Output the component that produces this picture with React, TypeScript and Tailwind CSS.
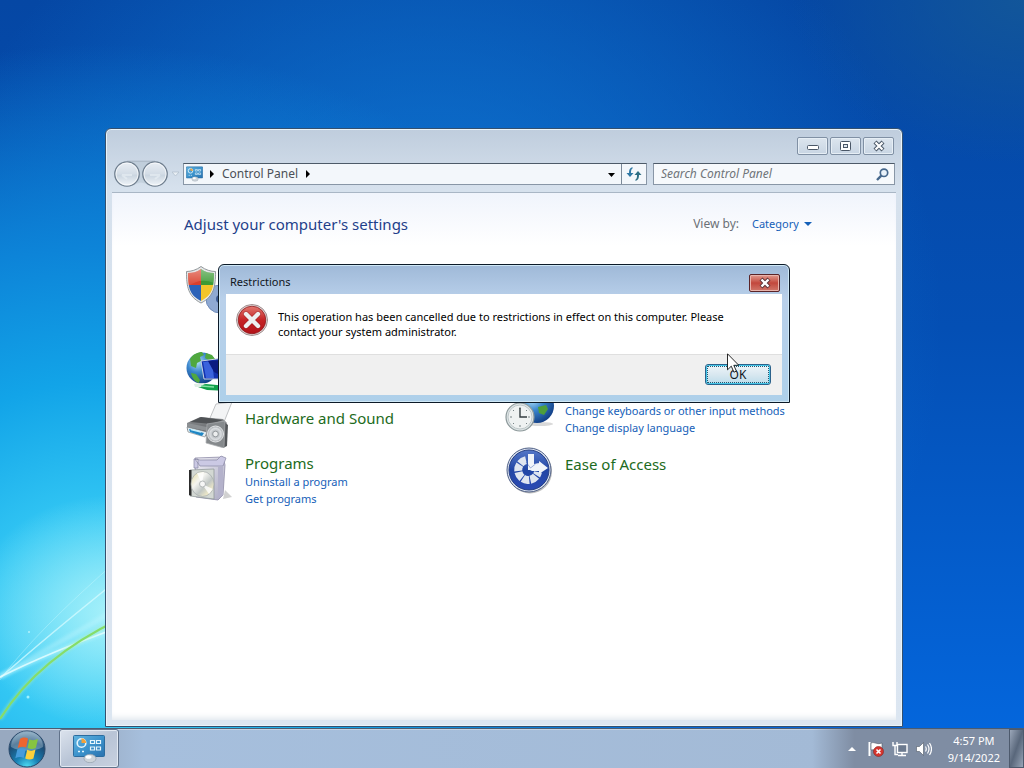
import type { ReactNode } from 'react';

interface Category {
  title?: string;
  links: string[];
  icon: ReactNode;
  className: string;
}

function Wallpaper() {
  return (
    <svg className="absolute bottom-0 left-0 h-[220px] w-[260px]" viewBox="0 0 260 220" fill="none" aria-hidden="true">
      <defs>
        <filter id="soft" x="-20%" y="-20%" width="140%" height="140%">
          <feGaussianBlur stdDeviation="1.6" />
        </filter>
      </defs>
      <path d="M0 168 Q50 140 110 105" stroke="#c6f8ff" strokeWidth="5" opacity=".35" filter="url(#soft)" />
      <path d="M0 170 Q45 130 120 70" stroke="#d5fbff" strokeWidth="1.6" opacity=".75" />
      <path d="M0 172 Q34 125 120 50" stroke="#d5fbff" strokeWidth="1" opacity=".35" />
      <path d="M0 169 Q50 144 120 119" stroke="#b9f7ff" strokeWidth="5" opacity=".5" filter="url(#soft)" />
      <path d="M0 169 Q50 144 120 119" stroke="#e4fdff" strokeWidth="1.8" opacity=".85" />
      <path d="M0 211 Q38 150 120 111" stroke="#a8f0b0" strokeWidth="4" opacity=".5" filter="url(#soft)" />
      <path d="M0 211 Q38 150 120 111" stroke="#86dd69" strokeWidth="2" />
      <circle cx="28" cy="189" r="1.5" fill="#b9fbff" opacity=".8" />
      <circle cx="29" cy="124" r="1" fill="#d5fbff" opacity=".7" />
    </svg>
  );
}

function ControlPanelIcon({ className }: { className: string }) {
  return (
    <svg className={className} viewBox="0 0 32 28" fill="none" aria-hidden="true">
      <defs>
        <linearGradient id="cpl" x1="0" y1="0" x2="1" y2="1">
          <stop stopColor="#62b4e0" />
          <stop offset=".5" stopColor="#3d94cd" />
          <stop offset="1" stopColor="#2a72ae" />
        </linearGradient>
      </defs>
      <rect x=".5" y=".5" width="31" height="21" rx="1" fill="url(#cpl)" stroke="#2b6c9f" />
      <circle cx="8.5" cy="8" r="4.3" stroke="#e4f5fd" strokeWidth="1.6" />
      <path d="M8.5 8V3.2A4.8 4.8 0 0 1 13.2 8z" fill="#f3a23a" />
      <path d="M17.5 5.5h4v3h-4zM23.5 5.5h4v3h-4zM17.5 12h4v3h-4zM23.5 12h4v3h-4z" stroke="#e4f5fd" strokeWidth="1.2" />
      <path d="M5 16.5h2M9 16.5h2" stroke="#e4f5fd" strokeWidth="1.5" />
      <ellipse cx="17" cy="23.5" rx="6" ry="4.200" fill="#cdd4da" stroke="#8b98a5" strokeWidth=".6" />
      <ellipse cx="15.5" cy="22" rx="3" ry="1.800" fill="#fff" />
    </svg>
  );
}

function NavButtons() {
  return (
    <svg className="h-[30px] w-[71px] shrink-0" viewBox="0 0 71 30" fill="none" aria-hidden="true">
      <defs>
        <linearGradient id="nav" x1="0" y1="0" x2="0" y2="1">
          <stop stopColor="#e9eef4" />
          <stop offset=".5" stopColor="#d3dce6" />
          <stop offset=".55" stopColor="#cad5e0" />
          <stop offset="1" stopColor="#f2f6fa" />
        </linearGradient>
      </defs>
      <path d="M15 2.5h28a12.5 12.5 0 0 1 0 25c-6 0-10-4-14-4s-8 4-14 4a12.5 12.5 0 0 1 0-25z" fill="#b7c4d2" opacity=".55" />
      <path d="M15 2.2h28" stroke="#a5b2c0" />
      <circle cx="15" cy="15" r="12.2" fill="url(#nav)" stroke="#707f8f" strokeWidth="1.3" />
      <circle cx="43" cy="15" r="12.2" fill="url(#nav)" stroke="#707f8f" strokeWidth="1.3" />
      <circle cx="15" cy="15" r="11" stroke="#fff" strokeWidth=".8" opacity=".8" />
      <circle cx="43" cy="15" r="11" stroke="#fff" strokeWidth=".8" opacity=".8" />
      <path d="M10 16l5 4M10 16h10M48 16l-5 4M48 16H38" stroke="#e6ecf2" strokeWidth="2" opacity=".7" />
      <path d="M60 13h7l-3.5 4z" fill="#e9eff5" stroke="#b3c0ce" strokeWidth=".8" />
    </svg>
  );
}

function ShieldIcon() {
  return (
    <svg className="size-12 overflow-visible" viewBox="0 0 48 48" fill="none" aria-hidden="true">
      <defs>
        <clipPath id="shield">
          <path d="M15 3C11 6 6 7 2 7c0 13 1 22 13 28C27 29 28 20 28 7c-4 0-9-1-13-4z" />
        </clipPath>
        <linearGradient id="gloss" x1="0" y1="0" x2="0" y2="1">
          <stop stopColor="#fff" stopOpacity=".45" />
          <stop offset="1" stopColor="#fff" stopOpacity="0" />
        </linearGradient>
      </defs>
      <circle cx="34" cy="33" r="14" fill="#8fa9d2" stroke="#6f8bb9" />
      <circle cx="34" cy="33" r="4" fill="#3c5b93" />
      <path d="M15 .5C10.500 4 5 5.500.5 5.500c0 15 1.500 25 14.500 31.500 13-6.500 14.500-16.500 14.500-31.500C25 5.500 19.500 4 15 .5z" fill="#e6e8e9" stroke="#878d91" strokeWidth=".9" />
      <g clipPath="url(#shield)">
        <path d="M0 0h15v19H0z" fill="#d9402b" />
        <path d="M15 0h15v19H15z" fill="#3c9a34" />
        <path d="M0 19h15v19H0z" fill="#2b62b8" />
        <path d="M15 19h15v19H15z" fill="#f3c52a" />
        <path d="M0 0h30v18Q14 10 0 22z" fill="url(#gloss)" />
      </g>
    </svg>
  );
}

function NetworkIcon() {
  return (
    <svg className="size-12 overflow-visible" viewBox="0 0 48 48" fill="none" aria-hidden="true">
      <defs>
        <radialGradient id="globe" cx=".35" cy=".3" r=".75">
          <stop stopColor="#b4e2f8" />
          <stop offset=".45" stopColor="#3b86cd" />
          <stop offset="1" stopColor="#103c84" />
        </radialGradient>
      </defs>
      <circle cx="16" cy="20" r="15.500" fill="url(#globe)" />
      <path d="M4 11c3-5 8-7 12-7l2 3-4 2 1 4-4 2-1 5-5-2zM5 25l5 1 4 6-1 3c-4-1-7-5-8-10zM20 5l6 2 3 4-5 2-5-3z" fill="#50a83f" />
      <path d="M15 13l23-3v21H18z" fill="#1231ad" stroke="#c8d3e2" />
      <path d="M17 14l9-1 2 17h-8z" fill="#3a62dc" />
      <path d="M22 13l16-1v17L28 24z" fill="#0a1a80" />
      <path d="M9 38l11-2 22 2v5l-21-1z" fill="#12a04b" />
      <path d="M8 36l11-1-4 4-6 0z" fill="#dfeee5" />
      <path d="M15 38l13 1" stroke="#7fe0a0" strokeWidth="1.5" />
    </svg>
  );
}

function HardwareIcon() {
  return (
    <svg className="size-12" viewBox="0 0 48 48" fill="none" aria-hidden="true">
      <defs>
        <linearGradient id="metal" x1="0" y1="0" x2="0" y2="1">
          <stop stopColor="#94979a" />
          <stop offset="1" stopColor="#4e5154" />
        </linearGradient>
        <radialGradient id="cone">
          <stop stopColor="#f0f2f3" />
          <stop offset=".35" stopColor="#b7bcc0" />
          <stop offset=".7" stopColor="#dadde0" />
          <stop offset="1" stopColor="#a0a5a9" />
        </radialGradient>
      </defs>
      <path d="M24 18l6-14 16-2-8 20z" fill="#f3f4f5" stroke="#b2b5b8" strokeWidth=".8" />
      <path d="M1 23l13-6 23 2 4 4-9 13H16L1 30z" fill="url(#metal)" />
      <path d="M4 22l11-5 22 3-11 4z" fill="#505356" />
      <path d="M1 23l20 4v4L1 27z" fill="#8d9194" />
      <path d="M1 27l20 5-2 5-17-5z" fill="#e3edf2" stroke="#777c80" strokeWidth=".6" />
      <path d="M3 29l15 4-2 3-12-4z" fill="#1f86c4" />
      <path d="M5 29.500l10 2.500" stroke="#c6eefb" strokeWidth="1.500" />
      <path d="M38 22l4 3-1 21-4 2z" fill="#54575a" />
      <path d="M21 24l18-3-1 27-18-5z" fill="#85898c" stroke="#aaaeb0" strokeWidth=".7" />
      <circle cx="29.500" cy="34" r="8" fill="url(#cone)" stroke="#e4e6e8" />
      <circle cx="29.500" cy="34" r="2.800" fill="#eceeef" stroke="#858a8e" strokeWidth=".8" />
    </svg>
  );
}

function ProgramsIcon() {
  return (
    <svg className="size-12" viewBox="0 0 48 48" fill="none" aria-hidden="true">
      <defs>
        <linearGradient id="box" x1="0" y1="0" x2="1" y2="1">
          <stop stopColor="#f1f0f7" />
          <stop offset="1" stopColor="#a9a8c0" />
        </linearGradient>
        <linearGradient id="disc" x1="0" y1="0" x2="1" y2="1">
          <stop stopColor="#e6dd9c" />
          <stop offset=".35" stopColor="#f4f4f0" />
          <stop offset=".6" stopColor="#c0c6c4" />
          <stop offset=".8" stopColor="#ece7c8" />
          <stop offset="1" stopColor="#cfd2d4" />
        </linearGradient>
      </defs>
      <path d="M37 46l9-2-7-7z" fill="#9a9a9a" opacity=".45" />
      <path d="M9 5l28-1 2 8-2 30-5 5-22-3z" fill="url(#box)" stroke="#8f8da8" strokeWidth=".8" />
      <path d="M9 6l5 7h23l3-8-5-2-4 4H14zM8 6h4v9H8z" fill="#cbc9e4" stroke="#8886a3" strokeWidth=".7" />
      <path d="M32 14v32l5-4V13z" fill="#b4b2cb" />
      <path d="M4 17l24-1v30L4 43z" fill="#d3d8d3" stroke="#8b9394" strokeWidth=".7" />
      <path d="M3 17h2.5v26L3 42z" fill="#2c2c2c" />
      <ellipse cx="16.500" cy="31" rx="11.500" ry="12.500" fill="url(#disc)" stroke="#a4a9aa" strokeWidth=".7" />
      <path d="M16 31L11 20l7-1zM16 31l7 10 4-5z" fill="#fff" opacity=".8" />
      <circle cx="16.500" cy="31" r="3" fill="#f6f6f6" stroke="#a5aaab" strokeWidth=".8" />
    </svg>
  );
}

function ClockIcon() {
  return (
    <svg className="size-12 overflow-visible" viewBox="0 0 48 48" fill="none" aria-hidden="true">
      <ellipse cx="34" cy="42" rx="13" ry="2" fill="#000" opacity=".15" />
      <circle cx="31" cy="24" r="17" fill="url(#globe)" />
      <path d="M26 10l7 1 3 6-5 4-6-2zM32 25l8-2 2 4-4 6-5-2zM42 13l4 5-4 1z" fill="#4d9e3c" />
      <circle cx="14" cy="35" r="14" fill="#dde4e5" stroke="#8d999b" strokeWidth="1.2" />
      <circle cx="14" cy="35" r="12" fill="#eff2f2" stroke="#bfc8ca" />
      <path d="M14 25v2M14 43v2M4 35h2M22 35h2M7 28l1 1M20 41l1 1M7 42l1-1M20 29l1-1" stroke="#788487" />
      <path d="M14 26v9h7" stroke="#333c40" strokeWidth="1.4" />
    </svg>
  );
}

function EaseOfAccessIcon() {
  return (
    <svg className="size-12 overflow-visible" viewBox="0 0 48 48" fill="none" aria-hidden="true">
      <defs>
        <linearGradient id="ease" x1="0" y1="0" x2="0" y2="1">
          <stop stopColor="#5578c8" />
          <stop offset=".5" stopColor="#2145a5" />
          <stop offset="1" stopColor="#2b4bb4" />
        </linearGradient>
      </defs>
      <circle cx="24" cy="25.5" r="22" fill="#000" opacity=".25" />
      <circle cx="23" cy="24" r="22" fill="#dce3ef" stroke="#4e5f86" />
      <circle cx="23" cy="24" r="20" fill="url(#ease)" stroke="#253f86" />
      <path d="M20 14.200A10 10 0 1 0 32 26" stroke="#dfe5f0" strokeWidth="8" strokeDasharray="6.700 1.100" />
      <path d="M22 8h6v10l5-1-6 7h-5z" fill="#f0f4fa" />
      <path d="M24 24l9-7v-2l9 7-9 6v-3h-7z" fill="#f0f4fa" />
      <path d="M20 16l4.500 6 5-4" stroke="#2145a5" strokeWidth=".8" opacity=".5" />
    </svg>
  );
}

const LEFT: Category[] = [
  { links: [], icon: <ShieldIcon />, className: 'h-[82px]' },
  { links: [], icon: <NetworkIcon />, className: 'h-[52px]' },
  { title: 'Hardware and Sound', links: [], icon: <HardwareIcon />, className: 'h-[53px]' },
  { title: 'Programs', links: ['Uninstall a program', 'Get programs'], icon: <ProgramsIcon />, className: '' },
];

const RIGHT: Category[] = [
  { links: ['Change keyboards or other input methods', 'Change display language'], icon: <ClockIcon />, className: 'mt-[116px] h-16' },
  { title: 'Ease of Access', links: [], icon: <EaseOfAccessIcon />, className: '' },
];

function CategoryItem({ item }: { item: Category }) {
  const offset = !item.title ? 'pt-5' : item.links.length ? '' : 'pt-2';
  return (
    <li className={`flex gap-[11px] ${item.className}`}>
      <span className="shrink-0">{item.icon}</span>
      <div className={`flex flex-col items-start whitespace-nowrap ${offset}`}>
        {item.title ? (
          <a href="#" className="text-[15px] leading-5 text-[#1d6b21]">{item.title}</a>
        ) : null}
        {item.links.map((link) => (
          <a key={link} href="#" className="text-[11px] leading-[17px] text-[#1560b8]">{link}</a>
        ))}
      </div>
    </li>
  );
}

function CaptionButton({ label, children }: { label: string; children: ReactNode }) {
  return (
    <button
      type="button"
      aria-label={label}
      className="flex h-[18px] w-[31px] items-center justify-center rounded-[2px] border border-[#8090a4] bg-linear-to-b from-[#dce5ee] to-[#c8d5e3] shadow-[inset_0_0_0_1px_#e6eef5]"
    >
      <svg className="h-3 w-[14px]" viewBox="0 0 14 12" fill="none" aria-hidden="true">{children}</svg>
    </button>
  );
}

function ControlPanelWindow() {
  return (
    <section
      aria-label="Control Panel"
      className="absolute top-32 right-[121px] bottom-px left-[105px] flex flex-col rounded-t-md border border-[#34506f] bg-[#d9e4f0] bg-linear-to-b from-[#bfcddd] via-[#d6e1ed] via-10% to-[#dce6f1] px-[6px] pb-[6px] shadow-[inset_0_0_0_1px_#e9f4fa]"
    >
      <header className="border-b border-[#a9b6c5] pt-2 pb-[3px]">
        <div className="flex justify-end gap-[2px] pr-[2px]">
          <CaptionButton label="Minimize">
            <rect x="1.500" y="5.500" width="11" height="4" rx="1" fill="#fff" stroke="#4a5767" />
          </CaptionButton>
          <CaptionButton label="Maximize">
            <rect x="1.500" y="1.500" width="10" height="9" rx="1" fill="#fff" stroke="#4a5767" />
            <rect x="4.500" y="4.500" width="4" height="3" fill="#dfe7ef" stroke="#4a5767" />
          </CaptionButton>
          <CaptionButton label="Close">
            <path d="M3 2l8 8M11 2l-8 8" stroke="#4a5767" strokeWidth="4.200" />
            <path d="M3.500 2.500l7 7M10.500 2.500l-7 7" stroke="#fff" strokeWidth="2.200" />
          </CaptionButton>
        </div>
        <div className="mt-1 flex items-center pr-px">
          <NavButtons />
          <div className="flex h-[22px] min-w-0 flex-1 items-center border border-[#8896a6] border-t-[#4d5a68] bg-[#f3f7fb] text-[12px] text-[#4b5057]">
            <ControlPanelIcon className="mr-[7px] ml-[2px] h-4 w-[17px]" />
            <svg className="h-2 w-1" viewBox="0 0 4 8" aria-hidden="true"><path d="M0 0l4 4-4 4z" /></svg>
            <span className="mx-2">Control Panel</span>
            <svg className="h-2 w-1" viewBox="0 0 4 8" aria-hidden="true"><path d="M0 0l4 4-4 4z" /></svg>
            <button type="button" aria-label="Previous locations" className="ml-auto flex h-full w-[20px] items-center justify-center">
              <svg className="mt-[2px] h-1 w-[7px]" viewBox="0 0 7 4" aria-hidden="true"><path d="M0 0h7L3.500 4z" /></svg>
            </button>
            <button type="button" aria-label="Refresh" className="flex h-full w-[25px] items-center justify-center border-l border-[#7b8998]">
              <svg className="h-[14px] w-4" viewBox="0 0 16 14" fill="#2f78a4" aria-hidden="true">
                <path d="M6.500 0v1.500C5 2.500 5 4 5 6h2.500L4 10 .5 6H3C3 3 3.500 1 6.500 0z" />
                <path d="M9.500 14v-1.500C11 11.500 11 10 11 8H8.500L12 4l3.500 4H13c0 3-.5 5-3.500 6z" fill="#2d6f85" />
              </svg>
            </button>
          </div>
          <div className="ml-[6px] flex h-[22px] w-[242px] items-center border border-[#8896a6] border-t-[#4d5a68] bg-[#f6f9fc] pr-[5px] pl-[7px]">
            <input
              type="search"
              aria-label="Search Control Panel"
              placeholder="Search Control Panel"
              className="min-w-0 flex-1 bg-transparent text-[12px] italic outline-none placeholder:text-[#6f7479]"
            />
            <svg className="h-[13px] w-[13px]" viewBox="0 0 13 13" fill="none" stroke="#46688c" aria-hidden="true">
              <circle cx="8" cy="4.800" r="3.700" strokeWidth="1.700" fill="#e9f2fa" />
              <path d="M5.300 7.600L1 12" strokeWidth="2.400" />
            </svg>
          </div>
        </div>
      </header>

      <main className="min-h-0 flex-1 overflow-hidden bg-white bg-linear-to-b from-[#f0f4fc] to-white to-10% pt-[18px] pr-[84px] pl-[72px] shadow-[inset_0_-6px_6px_-4px_#dfe6ed]">
        <div className="flex h-[26px] items-center">
          <h1 className="text-[15px] text-[#1f3f8a]">Adjust your computer&apos;s settings</h1>
          <label htmlFor="view-by" className="ml-auto text-[12px] text-[#6b7076]">View by:</label>
          <span className="ml-[13px] flex items-center gap-[5px]">
            <select id="view-by" className="appearance-none bg-transparent text-[11px] text-[#1560b8]">
              <option>Category</option>
            </select>
            <svg className="h-1 w-2" viewBox="0 0 8 4" fill="#1560b8" aria-hidden="true"><path d="M0 0h8L4 4z" /></svg>
          </span>
        </div>
        <div className="mt-[29px] grid grid-cols-[320px_1fr] pl-[2px]">
          <ul>{LEFT.map((item, i) => <CategoryItem key={i} item={item} />)}</ul>
          <ul>{RIGHT.map((item, i) => <CategoryItem key={i} item={item} />)}</ul>
        </div>
      </main>
    </section>
  );
}

function RestrictionsDialog() {
  return (
    <div
      role="dialog"
      aria-labelledby="dialog-title"
      className="absolute top-[264px] left-[218px] w-[572px] rounded-t-md border border-[#0c1a28] bg-linear-to-b from-[#9fb9d8] via-[#b9d0ea] via-25% to-[#aed0ea] px-[7px] pb-[7px] shadow-[inset_0_0_0_1px_#cfe8f6]"
    >
      <div className="flex h-[29px] items-center justify-between pt-[6px] pr-[2px] pl-1">
        <h2 id="dialog-title" className="text-[11px] text-[#10151c]">Restrictions</h2>
        <button
          type="button"
          aria-label="Close"
          className="flex h-[18px] w-[31px] items-center justify-center rounded-[2px] border border-[#5a2428] bg-linear-to-b from-[#e09a90] via-[#c2473c] via-50% to-[#d0766a] shadow-[inset_0_0_0_1px_#e8b4ac]"
        >
          <svg className="h-3 w-[14px]" viewBox="0 0 14 12" fill="none" aria-hidden="true">
            <path d="M3 2l8 8M11 2l-8 8" stroke="#5b3338" strokeWidth="4.200" />
            <path d="M3.500 2.500l7 7M10.500 2.500l-7 7" stroke="#fff" strokeWidth="2.400" />
          </svg>
        </button>
      </div>
      <div className="flex h-[60px] gap-[10px] bg-white pt-[10px] pr-10 pl-[10px]">
        <svg className="size-8 shrink-0" viewBox="0 0 32 32" fill="none" aria-hidden="true">
          <defs>
            <linearGradient id="error" x1="0" y1="0" x2="0" y2="1">
              <stop stopColor="#e2786f" />
              <stop offset=".5" stopColor="#c52325" />
              <stop offset="1" stopColor="#b31219" />
            </linearGradient>
          </defs>
          <circle cx="16" cy="16" r="15.500" fill="#e3dcdc" stroke="#8d7677" strokeWidth=".8" />
          <circle cx="16" cy="16" r="13.800" fill="url(#error)" stroke="#8e1a1e" strokeWidth=".8" />
          <path d="M10 10l12 12M22 10L10 22" stroke="#8c1a1c" strokeWidth="5.500" strokeLinecap="round" opacity=".5" />
          <path d="M10 10l12 12M22 10L10 22" stroke="#eef0f0" strokeWidth="4.400" strokeLinecap="round" />
        </svg>
        <p className="pt-[5px] text-[11px] leading-[15px] text-black">
          This operation has been cancelled due to restrictions in effect on this computer. Please contact your system administrator.
        </p>
      </div>
      <div className="flex h-[41px] justify-end border-t border-[#dfdfdf] bg-[#f0f0f0] pt-[9px] pr-[11px]">
        <button
          type="button"
          className="h-[21px] w-[66px] rounded-[3px] border border-[#2c628b] bg-linear-to-b from-[#eef5f9] via-[#d9e8f0] via-50% to-[#bcdcea] p-px text-[12px] leading-none text-[#10151c] shadow-[inset_0_0_0_1px_#43c6e8]"
        >
          <span className="flex h-full items-center justify-center border border-dotted border-[#25566f]">OK</span>
        </button>
      </div>
    </div>
  );
}

function StartOrb() {
  return (
    <svg className="size-[38px]" viewBox="0 0 38 38" fill="none" aria-hidden="true">
      <defs>
        <radialGradient id="orb" cx=".5" cy="1" r=".95">
          <stop stopColor="#4fe0f5" />
          <stop offset=".35" stopColor="#1880b4" />
          <stop offset=".75" stopColor="#1d4a72" />
          <stop offset="1" stopColor="#6f93ae" />
        </radialGradient>
      </defs>
      <circle cx="19" cy="19" r="18" fill="url(#orb)" stroke="#29486a" />
      <path d="M3 17a16 16 0 0 1 32 0c-9 5-23 5-32 0z" fill="#cfe2ee" opacity=".35" />
      <path d="M12 9c3.200-2 5.600-1.600 8-.4l-1.900 9C15.500 16.300 13 16.400 9.700 18z" fill="#ec6530" />
      <path d="M21.300 9.300c3 1.300 5.400 1.100 8.700-.3l-2.200 9c-3 1.500-5.400 1.300-8.200 0z" fill="#86c440" />
      <path d="M9.300 19.500c3.200-1.700 5.700-1.500 8.400-.3l-2 8.700c-2.700-1.200-5.400-1.200-8.400.4z" fill="#459bdb" />
      <path d="M19.200 19.800c2.900 1.300 5.400 1.300 8.300-.2l-2.100 9c-3 1.300-5.400 1-8.200-.2z" fill="#fbd03c" />
    </svg>
  );
}

function Taskbar() {
  return (
    <footer className="flex h-10 shrink-0 border-t border-[#4b5c72] bg-linear-to-r from-[#98a9c0] from-8% via-[#a6bfdd] via-14% to-[#a3bad6] to-80% shadow-[inset_0_1px_0_#c5d3e3]">
      <button type="button" aria-label="Start" className="ml-2 flex items-center"><StartOrb /></button>
      <button
        type="button"
        aria-label="Control Panel window"
        className="ml-[13px] flex w-[60px] items-center justify-center rounded-[3px] border border-[#61728a] bg-linear-to-br from-[#dce3ed] via-[#b8c4d6] to-[#c8d1df] shadow-[inset_0_0_0_1px_#e2e9f2]"
      >
        <ControlPanelIcon className="h-7 w-8" />
      </button>
      <div className="ml-auto flex items-center bg-linear-to-r from-transparent to-[#7f8da3] to-20% pl-9 text-white">
        <svg className="h-1 w-2" viewBox="0 0 8 4" fill="#fff" aria-hidden="true"><path d="M0 4l4-4 4 4z" /></svg>
        <svg className="ml-3 h-4 w-4" viewBox="0 0 16 16" fill="none" aria-hidden="true">
          <path d="M1.500 1v14" stroke="#fff" strokeWidth="2" />
          <path d="M3 2c4-1.500 5 2 11 0v7c-5 2-7-1-11 0z" fill="#fff" stroke="#4f5966" strokeWidth=".6" />
          <circle cx="10.500" cy="10.500" r="5" fill="#d5362f" stroke="#86221f" strokeWidth=".6" />
          <path d="M8.500 8.500l4 4M12.500 8.500l-4 4" stroke="#fff" strokeWidth="1.600" />
        </svg>
        <svg className="ml-2 h-4 w-4" viewBox="0 0 16 16" fill="none" stroke="#fff" strokeWidth="1.400" aria-hidden="true">
          <rect x="5.500" y="3.500" width="9.500" height="8" fill="#6c7a8f" />
          <path d="M10 12v2.500M6 14.500h8M1 1v3.500h4V1M3 4.500v9h3" />
        </svg>
        <svg className="ml-2 h-4 w-4" viewBox="0 0 16 16" fill="none" stroke="#fff" strokeWidth="1.200" aria-hidden="true">
          <path d="M0.500 5.500h3l4-4v13l-4-4h-3z" fill="#fff" stroke="#4f5966" strokeWidth=".6" />
          <path d="M9.500 5.500q1.500 2.500 0 5M11.500 3.500q3 4.500 0 9M13.500 2q4 6 0 12" />
        </svg>
        <div className="ml-4 text-center text-[11px] leading-[17px]">
          <div>4:57 PM</div>
          <div>9/14/2022</div>
        </div>
        <button
          type="button"
          aria-label="Show desktop"
          className="ml-[9px] h-full w-[15px] border border-[#4d5a6d] bg-linear-to-br from-[#9ba7b9] via-[#59677b] to-[#98a5b7]"
        />
      </div>
    </footer>
  );
}

export default function App() {
  return (
    <div className="flex h-screen flex-col overflow-hidden bg-[#0758bd] font-['Noto_Sans',sans-serif]">
      <div className="relative min-h-0 flex-1 bg-[radial-gradient(ellipse_at_100%_0%,#12569a_0%,transparent_16%),radial-gradient(ellipse_14%_16%_at_11%_84%,#a8f1fa_0%,transparent_100%),radial-gradient(ellipse_60%_80%_at_10%_86%,#4fd6f6_0%,#34c8f4_18%,#12a4e8_42%,#0d84d8_65%,transparent_100%),radial-gradient(ellipse_50%_70%_at_42%_45%,#0f7cd8_0%,transparent_100%),linear-gradient(to_bottom,#0547a4_0%,#044fb4_45%,#0466dc_100%)]">
        <Wallpaper />
        <ControlPanelWindow />
        <RestrictionsDialog />
        <svg className="pointer-events-none absolute top-[353px] left-[727px] h-5 w-3" viewBox="0 0 12 20" aria-hidden="true">
          <path d="M.5.800v16l3.800-3.600 2.600 6 2.500-1.100-2.600-5.800h5z" fill="#fff" stroke="#111" strokeWidth=".9" />
        </svg>
      </div>
      <Taskbar />
    </div>
  );
}
